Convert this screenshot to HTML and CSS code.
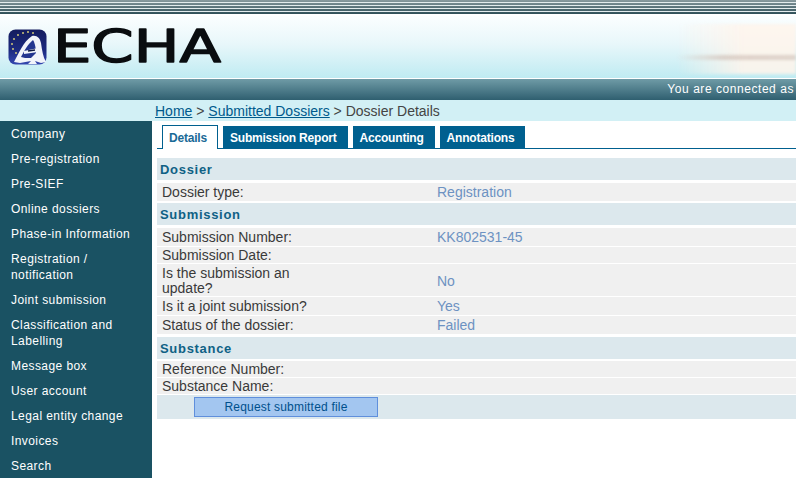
FILE: index.html
```html
<!DOCTYPE html>
<html lang="en">
<head>
<meta charset="utf-8">
<title>Dossier Details</title>
<link rel="stylesheet" href="styles.css">
</head>
<body>
<div class="stripes"></div>
<header class="banner">
  <svg class="emblem" width="39" height="36" viewBox="0 0 39 36">
    <defs>
      <linearGradient id="shield" x1="0" y1="0" x2="0" y2="1">
        <stop offset="0" stop-color="#141c5e"/>
        <stop offset="0.6" stop-color="#1c2a80"/>
        <stop offset="1" stop-color="#3447b0"/>
      </linearGradient>
    </defs>
    <rect x="0.5" y="0.5" width="38" height="35" rx="7" fill="url(#shield)"/>
    <g fill="#cfc67a">
      <circle cx="15" cy="4" r="1"/><circle cx="20" cy="3" r="1"/><circle cx="25" cy="4" r="1"/>
      <circle cx="10" cy="6" r="1"/><circle cx="6" cy="10" r="1"/><circle cx="4" cy="15" r="1"/>
      <circle cx="5" cy="20" r="1"/><circle cx="8" cy="24" r="1"/>
    </g>
    <path d="M6 33 C11 24 15 13 24 7 C29 6 32 9 33 14 C34 21 35 28 38 33 L33 34 L27 32 L29 35 L20 35 L23 32 L12 34 Z" fill="#f2f4fa"/>
    <path d="M13 28 C16 22 20 15 25 11 C27 14 28 20 28 24 L23 29 L17 29 Z" fill="#24358f"/>
    <path d="M16 22 L30 19 L30 23 L16 25 Z" fill="#f2f4fa"/>
    <path d="M20 22 L27 21" fill="none" stroke="#10183f" stroke-width="1.400"/>
  </svg>
  <svg class="wordmark" width="172" height="48" viewBox="0 0 172 48">
    <text class="wordmark-text" x="0" y="33.500" textLength="168" lengthAdjust="spacingAndGlyphs">ECHA</text>
  </svg>
  <div class="glow"></div>
</header>
<div class="statusbar">You are connected as</div>
<nav class="crumbs"><a href="#">Home</a> &gt; <a href="#">Submitted Dossiers</a> &gt; Dossier Details</nav>
<div class="layout">
  <aside class="sidebar">
    <a href="#">Company</a>
    <a href="#">Pre-registration</a>
    <a href="#">Pre-SIEF</a>
    <a href="#">Online dossiers</a>
    <a href="#">Phase-in Information</a>
    <a href="#">Registration /<br>notification</a>
    <a href="#">Joint submission</a>
    <a href="#">Classification and<br>Labelling</a>
    <a href="#">Message box</a>
    <a href="#">User account</a>
    <a href="#">Legal entity change</a>
    <a href="#">Invoices</a>
    <a href="#">Search</a>
  </aside>
  <main class="content">
    <div class="tabs">
      <a class="tab tab-active" href="#">Details</a>
      <a class="tab" href="#">Submission Report</a>
      <a class="tab" href="#">Accounting</a>
      <a class="tab" href="#">Annotations</a>
    </div>
    <h2 class="section section-first">Dossier</h2>
    <div class="row"><span class="label">Dossier type:</span><span class="value">Registration</span></div>
    <h2 class="section">Submission</h2>
    <div class="row"><span class="label">Submission Number:</span><span class="value">KK802531-45</span></div>
    <div class="row row-small"><span class="label">Submission Date:</span><span class="value"></span></div>
    <div class="row row-tall"><span class="label">Is the submission an update?</span><span class="value">No</span></div>
    <div class="row"><span class="label">Is it a joint submission?</span><span class="value">Yes</span></div>
    <div class="row"><span class="label">Status of the dossier:</span><span class="value">Failed</span></div>
    <h2 class="section section-last">Substance</h2>
    <div class="row row-small"><span class="label">Reference Number:</span><span class="value"></span></div>
    <div class="row row-small"><span class="label">Substance Name:</span><span class="value"></span></div>
    <div class="actions"><button class="request" type="button">Request submitted file</button></div>
  </main>
</div>
</body>
</html>
```
FILE: styles.css
```css
html, body { margin: 0; padding: 0; }
body {
  width: 796px;
  height: 478px;
  overflow: hidden;
  background: #fff;
  font-family: "Liberation Sans", Arial, sans-serif;
  font-size: 12px;
}
a { color: inherit; }
.stripes {
  height: 14px;
  background:
    repeating-linear-gradient(to bottom, rgba(255,255,255,0) 0, rgba(255,255,255,0) 2px, #e3ebed 2px, #e3ebed 3px),
    linear-gradient(to bottom, #8a9ba0, #2f4f58);
  border-bottom: 2px solid #fff;
}
.banner {
  height: 62px;
  display: flex;
  align-items: flex-start;
  gap: 9px;
  padding: 12px 0 0 8px;
  box-sizing: border-box;
  overflow: hidden;
  position: relative;
  background: linear-gradient(to bottom, #fbfeff 0%, #e8f7fa 45%, #bfebf2 100%);
}
.emblem { display: block; margin-top: 1px; }
.wordmark { display: block; margin-left: -3px; overflow: visible; }
.wordmark-text {
  font-family: "DejaVu Sans", sans-serif;
  font-weight: 400;
  font-size: 45px;
  fill: #0a0d10;
  stroke: #0a0d10;
  stroke-width: 1.4px;
  stroke-linejoin: round;
}
.glow {
  position: absolute;
  right: 0;
  top: 8px;
  width: 120px;
  height: 50px;
  background:
    linear-gradient(to right, rgba(255,255,255,0), rgba(200,180,170,.55) 40%, rgba(205,190,180,.6)) 0 31px / 100% 5px no-repeat,
    linear-gradient(to right, rgba(255,255,255,0), rgba(255,244,235,.85) 55%) 0 0 / 100% 100% no-repeat;
  filter: blur(1.5px);
}
.statusbar {
  margin-top: 1px;
  height: 21px;
  line-height: 21px;
  background: linear-gradient(to bottom, #6f9ba6, #2f5f70);
  color: #fff;
  font-size: 12px;
  letter-spacing: .55px;
  white-space: nowrap;
  text-align: right;
  padding-right: 2px;
}
.crumbs {
  height: 21px;
  line-height: 22px;
  background: #d2f0f5;
  color: #444;
  font-size: 14px;
  padding-left: 155px;
}
.crumbs a { color: #005a8c; }
.layout { display: flex; height: 357px; }
.sidebar {
  width: 152px;
  flex: none;
  box-sizing: border-box;
  padding-top: 5px;
  background: #1a5263;
  color: #fff;
  font-size: 12px;
  line-height: 16px;
  letter-spacing: .42px;
}
.sidebar a {
  display: block;
  padding: 0 0 9px 11px;
  text-decoration: none;
}
.content { flex: 1; min-width: 0; padding-left: 5px; }
.tabs {
  display: flex;
  align-items: flex-end;
  gap: 5px;
  height: 27px;
  padding-left: 5px;
  border-bottom: 1px solid #00608f;
  box-sizing: content-box;
}
.tab {
  height: 22px;
  line-height: 24px;
  padding: 0 11px 0 7px;
  background: #00608f;
  color: #fff;
  font-size: 12px;
  font-weight: 700;
  letter-spacing: -.2px;
  text-decoration: none;
}
.tab-active {
  background: #fff;
  color: #1a6a96;
  border: 1px solid #00608f;
  border-bottom: 0;
  margin-bottom: -1px;
  height: 23px;
  padding: 0 10px 0 6px;
}
.section {
  margin: 2px 0 3px;
  height: 22px;
  line-height: 24px;
  background: #dce8ed;
  color: #0f6185;
  font-size: 13px;
  font-weight: 700;
  letter-spacing: .7px;
  padding-left: 3px;
}
.section-first { margin-top: 9px; }
.section-last { margin: 3px 0 2px; }
.row {
  display: flex;
  align-items: center;
  min-height: 18px;
  margin-bottom: 1px;
  background: #f0f0f0;
  font-size: 14px;
  line-height: 15px;
  color: #3a3a3a;
}
.row-tall { min-height: 32px; box-sizing: border-box; padding-top: 2px; }
.row-small { min-height: 16px; }
.label { width: 170px; flex: none; padding-left: 5px; margin-right: 100px; }
.value { color: #6d92c2; padding-left: 5px; }
.actions {
  height: 24px;
  background: #dce8ed;
  padding: 2px 0 0 37px;
  box-sizing: border-box;
}
.request {
  display: block;
  width: 184px;
  height: 20px;
  margin: 0;
  padding: 0;
  background: #a3c6f0;
  border: 1px solid #5f8fdc;
  color: #00508c;
  font-family: inherit;
  font-size: 12px;
  letter-spacing: .2px;
}
```
